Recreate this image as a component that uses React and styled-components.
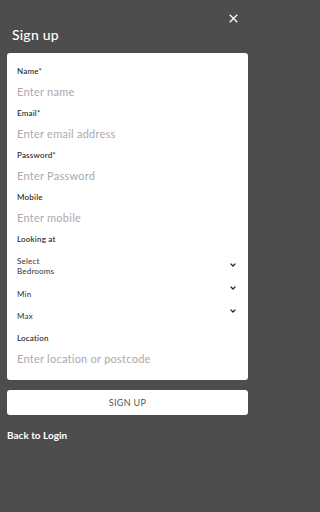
import React from "react";
import styled, { createGlobalStyle } from "styled-components";

const Global = createGlobalStyle`
  html, body { margin: 0; padding: 0; background: #4d4d4d; }
  body { font-family: "Lato", "Open Sans", sans-serif; }
  * { box-sizing: border-box; }
`;

const Page = styled.div`
  width: 256px;
  height: 512px;
  background: #4d4d4d;
  padding: 0 8px 0 7px;
  display: flex;
  flex-direction: column;
`;

const TopBar = styled.div`
  height: 24px;
  display: flex;
  justify-content: flex-end;
  align-items: flex-end;
  padding-right: 9px;
`;

const CloseBtn = styled.button`
  width: 12px;
  height: 12px;
  padding: 0;
  border: 0;
  background: none;
  display: flex;
  align-items: center;
  justify-content: center;
  cursor: pointer;
`;

const Title = styled.h1`
  margin: 0 0 9px;
  padding-left: 5px;
  height: 20px;
  display: flex;
  align-items: center;
  font-size: 14px;
  font-weight: 500;
  color: #fff;
  letter-spacing: 0.2px;
`;

const Card = styled.form`
  background: #fff;
  border-radius: 3px;
  padding: 7px 12px 11px 10px;
  display: flex;
  flex-direction: column;
`;

const Label = styled.label`
  height: 21px;
  display: flex;
  align-items: center;
  font-size: 8px;
  font-weight: 500;
  color: #222;
  letter-spacing: 0.2px;
`;

const Input = styled.input`
  height: 21px;
  border: 0;
  outline: none;
  padding: 0;
  font-family: inherit;
  font-size: 11px;
  color: #222;
  letter-spacing: 0.25px;
  background: transparent;
  &::placeholder { color: #aaa; }
`;

const SelectRow = styled.div`
  height: ${(p) => p.$h}px;
  display: flex;
  justify-content: space-between;
  align-items: center;
`;

const SelectText = styled.span`
  font-size: 8px;
  line-height: 10px;
  color: #333;
  letter-spacing: 0.2px;
  width: 60px;
`;

const Chevron = styled.svg`
  width: 6px;
  height: 4px;
  transform: translateY(${(p) => p.$dy}px);
`;

const SignUpButton = styled.button`
  margin-top: 10px;
  height: 25px;
  background: #fff;
  border: 0;
  border-radius: 3px;
  font-family: inherit;
  font-size: 9px;
  color: #555;
  letter-spacing: 0.3px;
  cursor: pointer;
`;

const BackLink = styled.a`
  margin-top: 14px;
  font-size: 10px;
  font-weight: 700;
  color: #fff;
  text-decoration: none;
`;

const ChevronIcon = ({ dy }) => (
  <Chevron $dy={dy} viewBox="0 0 6 4">
    <path d="M0.6 0.6 L3 3 L5.4 0.6" fill="none" stroke="#222" strokeWidth="1.3" />
  </Chevron>
);

const fields = [
  ["Name*", "Enter name"],
  ["Email*", "Enter email address"],
  ["Password*", "Enter Password"],
  ["Mobile", "Enter mobile"],
];

export default function App() {
  return (
    <>
      <Global />
      <Page>
        <TopBar>
          <CloseBtn aria-label="close">
            <svg width="9" height="9" viewBox="0 0 9 9">
              <path d="M0.7 0.7 L8.3 8.3 M8.3 0.7 L0.7 8.3" stroke="#fff" strokeWidth="1.3" />
            </svg>
          </CloseBtn>
        </TopBar>
        <Title>Sign up</Title>
        <Card onSubmit={(e) => e.preventDefault()}>
          {fields.map(([l, p]) => (
            <React.Fragment key={l}>
              <Label>{l}</Label>
              <Input placeholder={p} />
            </React.Fragment>
          ))}
          <Label>Looking at</Label>
          <SelectRow $h={34}>
            <SelectText>Select Bedrooms</SelectText>
            <ChevronIcon dy={-1} />
          </SelectRow>
          <SelectRow $h={22}>
            <SelectText>Min</SelectText>
            <ChevronIcon dy={-6} />
          </SelectRow>
          <SelectRow $h={22}>
            <SelectText>Max</SelectText>
            <ChevronIcon dy={-5} />
          </SelectRow>
          <Label>Location</Label>
          <Input placeholder="Enter location or postcode" />
        </Card>
        <SignUpButton>SIGN UP</SignUpButton>
        <BackLink href="#">Back to Login</BackLink>
      </Page>
    </>
  );
}
